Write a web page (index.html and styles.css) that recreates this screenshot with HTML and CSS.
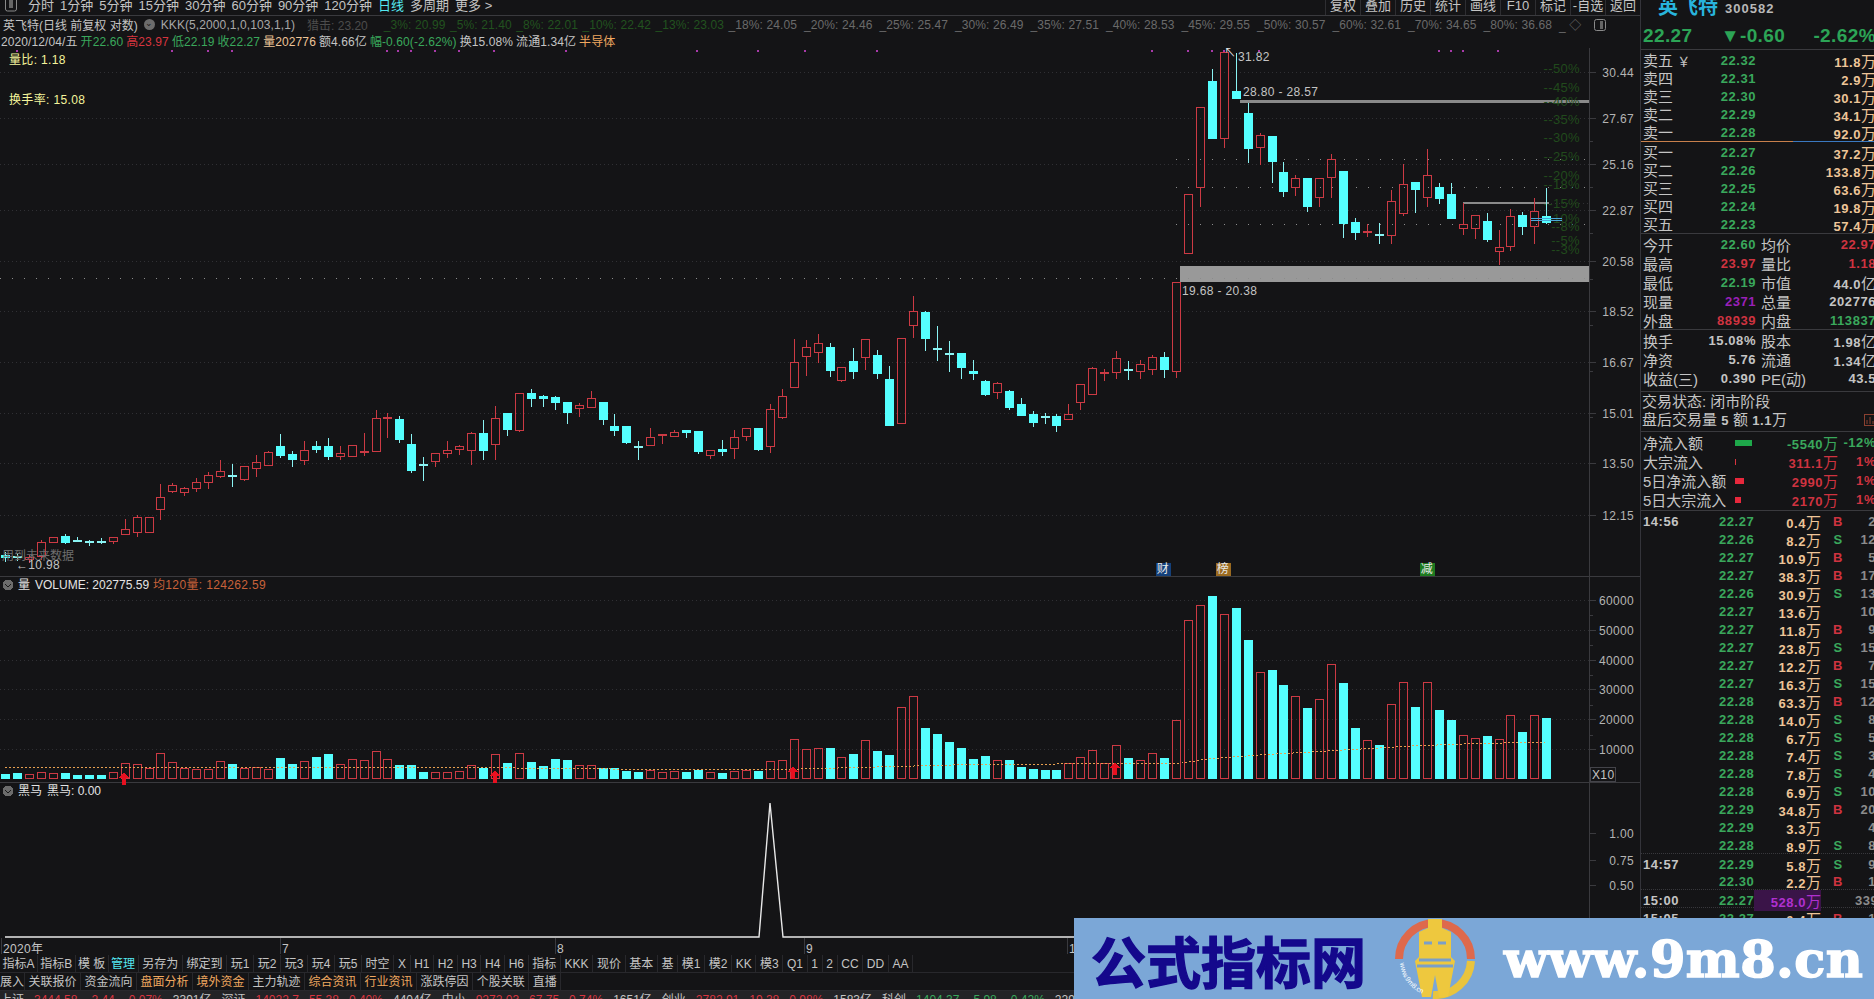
FILE: index.html
```html
<!DOCTYPE html>
<html lang="zh-CN">
<head>
  <meta charset="UTF-8" />
  <meta name="viewport" content="width=device-width, initial-scale=1" />
  <title>英飞特 300582</title>
  <link rel="stylesheet" href="styles.css">
</head>
<body>
  <div class="app">
    <main class="main">
      <div class="period-bar">
        <svg class="mini-icon" viewBox="0 0 12 12"><rect x="0.5" y="-3" width="11" height="14" rx="2"/><rect x="4" y="0" width="4" height="8"/></svg>
        <span>分时</span><span>1分钟</span><span>5分钟</span><span>15分钟</span><span>30分钟</span><span>60分钟</span><span>90分钟</span><span>120分钟</span>
        <span class="cyan">日线</span><span>多周期</span><span>更多 &gt;</span>
        <div class="period-tools">
          <span>复权</span><span>叠加</span><span>历史</span><span>统计</span><span>画线</span><span>F10</span><span>标记</span><span>-自选</span><span>返回</span>
        </div>
      </div>

      <div class="quote-line names">
        <span>英飞特(日线 前复权 对数)</span>
        <span class="chevron">⌄</span>
        <span class="kkk">KKK(5,2000,1,0,103,1,1)</span>
        <span class="hunt">猎击: 23.20</span>
        <span class="pct dark">_3%: 20.99</span><span class="pct dark">_5%: 21.40</span><span class="pct dark">_8%: 22.01</span><span class="pct dark">_10%: 22.42</span><span class="pct dark">_13%: 23.03</span>
        <span class="pct">_18%: 24.05</span><span class="pct">_20%: 24.46</span><span class="pct">_25%: 25.47</span><span class="pct">_30%: 26.49</span><span class="pct">_35%: 27.51</span><span class="pct">_40%: 28.53</span><span class="pct">_45%: 29.55</span><span class="pct">_50%: 30.57</span><span class="pct">_60%: 32.61</span><span class="pct">_70%: 34.65</span><span class="pct">_80%: 36.68</span>
        <span class="pct">_ ◇</span>
        <svg class="mini-icon end" viewBox="0 0 12 12"><rect x="0.5" y="0.5" width="11" height="11" rx="2"/><rect x="6" y="2" width="3" height="8"/></svg>
      </div>

      <div class="quote-line ohlc">
        <span>2020/12/04/五</span>
        <span class="green">开22.60</span>
        <span class="red">高23.97</span>
        <span class="green">低22.19</span>
        <span class="green">收22.27</span>
        <span class="tan">量202776</span>
        <span>额4.66亿</span>
        <span class="green">幅-0.60(-2.62%)</span>
        <span>换15.08%</span>
        <span>流通1.34亿</span>
        <span class="orange">半导体</span>
      </div>

      <div class="stage">
        <svg id="chart" class="chart" width="1640" height="907" viewBox="0 48 1640 907"></svg>
      </div>

      <div class="toolbar">
        <span class="tight">指标A</span><span class="tight">指标B</span><span class="tight">模 板</span><span class="tight cyan">管理</span><span>另存为</span><span>绑定到</span><span>玩1</span><span>玩2</span><span>玩3</span><span>玩4</span><span>玩5</span><span>时空</span><span>X</span><span>H1</span><span>H2</span><span>H3</span><span>H4</span><span>H6</span><span>指标</span><span>KKK</span><span>现价</span><span>基本</span><span>基</span><span>模1</span><span>模2</span><span>KK</span><span>模3</span><span>Q1</span><span>1</span><span>2</span><span>CC</span><span>DD</span><span>AA</span>
      </div>
      <div class="toolbar tabs">
        <span class="cut">展入</span><span>关联报价</span><span>资金流向</span><span class="orange">盘面分析</span><span class="orange">境外资金</span><span>主力轨迹</span><span class="orange">综合资讯</span><span class="orange">行业资讯</span><span>涨跌停因</span><span>个股关联</span><span>直播</span>
      </div>
      <div class="status-bar">
        <span>上证</span><span class="red">3444.58</span><span class="red">-2.44</span><span class="red">-0.07%</span><span>3391亿</span>
        <span>深证</span><span class="red">14022.7</span><span class="red">55.38</span><span class="red">0.40%</span><span>4404亿</span>
        <span>中小</span><span class="red">9272.03</span><span class="red">67.75</span><span class="red">0.74%</span><span>1651亿</span>
        <span>创业</span><span class="red">2782.91</span><span class="red">19.38</span><span class="red">0.98%</span><span>1583亿</span>
        <span>科创</span><span class="green">1404.37</span><span class="green">-5.98</span><span class="green">-0.42%</span><span>229.7亿</span>
      </div>
    </main>

    <aside class="side">
      <div class="stock-head"><span class="stock-name">英飞特</span><span class="stock-code">300582</span></div>
      <div class="price-line">
        <span>22.27</span><span>▼-0.60</span><span>-2.62%</span>
      </div>

      <section class="book">
        <div class="book-row"><span class="cn">卖五 <small>￥</small></span><b class="green">22.32</b><b class="tan">11.8<i>万</i></b></div>
        <div class="book-row"><span class="cn">卖四</span><b class="green">22.31</b><b class="tan">2.9<i>万</i></b></div>
        <div class="book-row"><span class="cn">卖三</span><b class="green">22.30</b><b class="tan">30.1<i>万</i></b></div>
        <div class="book-row"><span class="cn">卖二</span><b class="green">22.29</b><b class="tan">34.1<i>万</i></b></div>
        <div class="book-row"><span class="cn">卖一</span><b class="green">22.28</b><b class="tan">92.0<i>万</i></b></div>
      </section>
      <div class="book-split"></div>
      <section class="book buy bordered">
        <div class="book-row"><span class="cn">买一</span><b class="green">22.27</b><b class="tan">37.2<i>万</i></b></div>
        <div class="book-row"><span class="cn">买二</span><b class="green">22.26</b><b class="tan">133.8<i>万</i></b></div>
        <div class="book-row"><span class="cn">买三</span><b class="green">22.25</b><b class="tan">63.6<i>万</i></b></div>
        <div class="book-row"><span class="cn">买四</span><b class="green">22.24</b><b class="tan">19.8<i>万</i></b></div>
        <div class="book-row"><span class="cn">买五</span><b class="green">22.23</b><b class="tan">57.4<i>万</i></b></div>
      </section>

      <section class="bordered">
        <div class="info-row"><span class="cn">今开</span><b class="green">22.60</b><span class="cn">均价</span><b class="red">22.97</b></div>
        <div class="info-row"><span class="cn">最高</span><b class="red">23.97</b><span class="cn">量比</span><b class="red">1.18</b></div>
        <div class="info-row"><span class="cn">最低</span><b class="green">22.19</b><span class="cn">市值</span><b>44.0<i>亿</i></b></div>
        <div class="info-row"><span class="cn">现量</span><b class="purple">2371</b><span class="cn">总量</span><b>202776</b></div>
        <div class="info-row"><span class="cn">外盘</span><b class="red">88939</b><span class="cn">内盘</span><b class="green">113837</b></div>
      </section>

      <section class="bordered pad-bottom">
        <div class="info-row"><span class="cn">换手</span><b>15.08%</b><span class="cn">股本</span><b>1.98<i>亿</i></b></div>
        <div class="info-row"><span class="cn">净资</span><b>5.76</b><span class="cn">流通</span><b>1.34<i>亿</i></b></div>
        <div class="info-row"><span class="cn">收益(三)</span><b>0.390</b><span class="cn">PE(动)</span><b>43.5</b></div>
      </section>

      <section class="bordered after-hours">
        <div class="status-row cn">交易状态: 闭市阶段</div>
        <div class="status-row cn">盘后交易量 <b>5</b> 额 <b>1.1</b>万
          <svg class="mini-chart" viewBox="0 0 12 12"><rect x="0.5" y="0.5" width="11" height="11"/><path d="M3 10V6M6 10V3M9 10V7"/></svg>
        </div>
      </section>

      <section class="bordered flow">
        <div class="flow-row"><span class="cn">净流入额</span><em class="flow-bar bar-green"></em><b class="green">-5540<i>万</i></b><b class="green">-12%</b></div>
        <div class="flow-row"><span class="cn">大宗流入</span><em class="flow-bar bar-tick"></em><b class="red">311.1<i>万</i></b><b class="red">1%</b></div>
        <div class="flow-row"><span class="cn">5日净流入额</span><em class="flow-bar bar-red"></em><b class="red">2990<i>万</i></b><b class="red">1%</b></div>
        <div class="flow-row"><span class="cn">5日大宗流入</span><em class="flow-bar bar-small"></em><b class="red">2170<i>万</i></b><b class="red">1%</b></div>
      </section>

      <section id="ticks" class="ticks"></section>
    </aside>
  </div>

  <div class="banner">
    <span class="banner-title">公式指标网</span>
    <svg class="banner-logo" viewBox="0 0 80 80">
      <path class="arc-red" d="M4 40 A36 36 0 0 1 76 40"/>
      <path class="arc-yellow" d="M76 42 A36 36 0 0 1 38 76"/>
      <path class="figure" d="M33 0H47V9L56 13V38L60 42L53 78H44L40 56L36 78H27L20 42L24 38V13L33 9Z"/>
      <path class="figure-band" d="M24 41H56M22 47H58M29 24H37M43 24H51"/>
      <path id="logoArc" class="arc-guide" d="M5 44 A36 36 0 0 0 36 77"/>
      <text class="logo-text"><textPath href="#logoArc">www.9m8.cn</textPath></text>
    </svg>
    <span class="banner-url">www.9m8.cn</span>
  </div>

  <script src="chart.js"></script>
</body>
</html>
```

FILE: styles.css
```css
* {
  box-sizing: border-box;
}
html, body {
  margin: 0;
  height: 100%;
  overflow: hidden;
}
body {
  background: #141416;
  color: #c4c4c4;
  font-family: "Liberation Sans", "Noto Sans CJK SC", sans-serif;
  font-size: 12px;
}
.app {
  display: flex;
  width: 1874px;
  height: 999px;
}
.main {
  width: 1641px;
  height: 999px;
  border-right: 1px solid #34343a;
  display: flex;
  flex-direction: column;
  flex-shrink: 0;
  overflow: hidden;
}

.cyan { color: #55e8f0; }
.green { color: #3aa85c; }
.red { color: #d8343f; }
.tan { color: #eec598; }
.orange { color: #f0a860; }
.purple { color: #a020c0; }

/* top period bar */
.period-bar {
  height: 16px;
  flex-shrink: 0;
  display: flex;
  gap: 6px;
  font-size: 13px;
  line-height: 11px;
  border-bottom: 1px solid #3a3a3e;
  overflow: hidden;
}
.mini-icon {
  width: 12px;
  height: 12px;
  margin: 0 5px 0 5px;
  fill: none;
  stroke: #8a8a8a;
}
.mini-icon rect + rect {
  fill: #666;
  stroke: none;
}
.period-tools {
  margin-left: auto;
  display: flex;
}
.period-tools span {
  width: 35px;
  height: 15px;
  text-align: center;
  border-left: 1px solid #2e2e32;
}

/* quote text rows */
.quote-line {
  display: flex;
  align-items: center;
  flex-shrink: 0;
  white-space: nowrap;
}
.names {
  height: 17px;
  padding-left: 3px;
}
.chevron {
  width: 11px;
  height: 11px;
  margin: 0 6px 0 6px;
  border-radius: 50%;
  background: #6c6c6c;
  color: #1a1a1a;
  font-size: 9px;
  line-height: 8px;
  text-align: center;
}
.kkk {
  letter-spacing: 0.1px;
  color: #a8a8a8;
}
.hunt {
  margin-left: 12px;
  margin-right: 16px;
  color: #4c4c4c;
}
.pct {
  margin-right: 7px;
  color: #6a6a6a;
  letter-spacing: 0.1px;
}
.pct.dark {
  margin-right: 4.5px;
  color: #22521f;
}
.names .end {
  margin: 0 0 0 6px;
}
.ohlc {
  height: 15px;
  padding: 0 0 1px 1px;
  gap: 3px;
  letter-spacing: 0.1px;
}

/* chart */
.stage {
  position: relative;
  height: 907px;
  flex-shrink: 0;
}
.chart {
  display: block;
  shape-rendering: crispEdges;
}
.grid {
  stroke: #303034;
  stroke-dasharray: 1 3;
}
.grid-sparse {
  stroke: #8c8c8c;
  stroke-dasharray: 1 11;
}
.pane-line {
  stroke: #3a3a3e;
}
.axis-line {
  stroke: #3a3a3e;
}
.band {
  fill: #999999;
}
.band-thin {
  fill: #8a8a8a;
}
.purple-dot {
  fill: #a83aa8;
}
.up {
  fill: none;
  stroke: #cc3a44;
}
.down {
  fill: #55ffff;
}
.wick-up {
  stroke: #cc3a44;
}
.wick-down {
  stroke: #8af4f4;
}
.ma-line {
  fill: none;
  stroke: #e8a050;
  stroke-dasharray: 2 2;
}
.signal {
  fill: #e81020;
}
.black-horse {
  fill: none;
  stroke: #e8e8e8;
  stroke-width: 1.4;
  shape-rendering: geometricPrecision;
}
.level-blue {
  stroke: #4aa8d8;
}
.chart text {
  fill: #c4c4c4;
  font-size: 12px;
  letter-spacing: 0.35px;
  dominant-baseline: middle;
}
.chart .axis-label {
  text-anchor: end;
  fill: #b4b4b4;
}
.chart .pct-label {
  text-anchor: end;
  fill: #214a1c;
  font-size: 13px;
}
.chart .side-note {
  fill: #f4f49c;
}
.chart .note-dim {
  fill: #6e6e6e;
  letter-spacing: 0;
}
.chart .vol-avg {
  fill: #c8623a;
}
.chart .white {
  fill: #e4e4e4;
}
.chart .legend {
  fill: #e4e4e4;
  letter-spacing: 0;
}
.tag-blue { fill: #14407a; }
.tag-brown { fill: #9a6a20; }
.tag-green { fill: #1e7a20; }
.chart .tag-text {
  text-anchor: middle;
  fill: #e8e8e8;
}
.x10 {
  fill: #141416;
  stroke: #44444a;
}
.chev-circle {
  fill: #6c6c6c;
}
.chev-mark {
  fill: none;
  stroke: #1a1a1a;
}

/* bottom toolbars */
.toolbar {
  height: 18px;
  flex-shrink: 0;
  display: flex;
  line-height: 18px;
  border-bottom: 1px solid #28282c;
  white-space: nowrap;
}
.toolbar span {
  padding: 0 3.65px;
  border-right: 1px solid #28282c;
}
.toolbar .tight {
  padding: 0 2.4px;
}
.tabs span {
  padding: 0 3.5px;
}
.tabs .cut {
  width: 25px;
  padding: 0;
  text-align: right;
  overflow: hidden;
}
.status-bar {
  height: 9px;
  flex-shrink: 0;
  display: flex;
  gap: 10px;
  padding-top: 2px;
  background: #232326;
  line-height: 14px;
  overflow: hidden;
  white-space: nowrap;
}

/* right panel */
.side {
  width: 233px;
  height: 999px;
  flex-shrink: 0;
  overflow: hidden;
}
.stock-head {
  height: 17px;
  overflow: hidden;
  display: flex;
  align-items: center;
}
.stock-name {
  margin-left: 17px;
  margin-top: -3px;
  color: #28b4dc;
  font-size: 20px;
  font-weight: bold;
  line-height: 20px;
}
.stock-code {
  margin-left: 7px;
  font-weight: bold;
  font-size: 13px;
  letter-spacing: 1px;
  color: #b8b8b8;
}
.price-line {
  height: 33px;
  display: flex;
  justify-content: space-between;
  align-items: center;
  width: 235px;
  padding: 5px 0 0 2px;
  border-bottom: 1px solid #3a3a3e;
  color: #2ca456;
  font-size: 19px;
  font-weight: bold;
  letter-spacing: 0.4px;
}
.cn {
  font-size: 15px;
  white-space: nowrap;
  color: #c4c4c4;
}
.cn small {
  font-size: 13px;
}
.side b {
  font-size: 13px;
  letter-spacing: 0.55px;
  text-align: right;
  white-space: nowrap;
  color: #c4c4c4;
}
.side b.green { color: #3aa85c; }
.side b.red { color: #cf3340; }
.side b.tan { color: #eec598; }
.side b.purple { color: #9a20b8; }
.side i {
  font-style: normal;
  font-weight: normal;
  font-size: 15px;
  letter-spacing: 0;
}
.book-row {
  height: 18px;
  width: 235px;
  padding-left: 2px;
  display: grid;
  grid-template-columns: 76px 37px 120px;
  align-items: center;
}
.book-row .cn {
  margin-top: -3px;
}
.book-split {
  height: 2px;
  margin-top: 1px;
  background: linear-gradient(90deg, #c8804c 0, #c8804c 152px, #3a78c0 152px, #3a78c0 100%);
  border-bottom: 1px solid #141416;
}
.bordered {
  border-bottom: 1px solid #3a3a3e;
}
.book.buy {
  margin-top: -1px;
  padding-bottom: 1px;
}
.info-row {
  height: 19px;
  width: 235px;
  padding-left: 2px;
  display: grid;
  grid-template-columns: 76px 37px 5px 40px 75px;
  align-items: center;
}
.info-row .cn:nth-child(1) {
  grid-column: 1;
}
.info-row b:nth-child(2) {
  grid-column: 2;
  justify-self: end;
}
.info-row .cn:nth-child(3) {
  grid-column: 4;
}
.info-row b:nth-child(4) {
  grid-column: 5;
}
.pad-bottom {
  padding-bottom: 4px;
}
.after-hours {
  padding: 1px 0 2px 1px;
}
.status-row {
  height: 18px;
  line-height: 18px;
  position: relative;
}
.status-row b {
  font-size: 13px;
}
.mini-chart {
  position: absolute;
  left: 222px;
  top: 3px;
  width: 12px;
  height: 12px;
  fill: none;
  stroke: #8a4030;
}
.flow {
  padding-bottom: 2px;
}
.flow-row {
  height: 19px;
  width: 235px;
  padding-left: 2px;
  display: grid;
  grid-template-columns: 92px 24px 79px 38px;
  align-items: center;
}
.flow-bar {
  display: block;
  height: 6px;
}
.bar-green { width: 17px; background: #1ea84a; }
.bar-tick { width: 1px; background: #d8343f; }
.bar-red { width: 9px; background: #e8283c; }
.bar-small { width: 6px; background: #e8283c; }
.tick-row {
  height: 18px;
  width: 235px;
  padding-left: 2px;
  display: grid;
  grid-template-columns: 76px 35px 67px 34px 21px;
  align-items: center;
}
.tick-row.break {
  border-top: 1px dotted #38383c;
}
.tick-row .time {
  text-align: left;
}
.tick-row .side-b {
  text-align: center;
}
.side b.dim {
  color: #8c8c8c;
}
.side b.tick-vol {
  color: #eec598;
}
.side b.tick-big {
  color: #b030d0;
  background: #3a1448;
}

/* watermark banner lies over the bottom right corner */
.banner {
  position: absolute;
  right: 0;
  bottom: 0;
  width: 800px;
  height: 81px;
  display: flex;
  align-items: center;
  padding-left: 17px;
  background: #7ba7d7;
}
.banner-title {
  width: 275px;
  font-family: "Noto Sans CJK SC", sans-serif;
  font-size: 55px;
  font-weight: bold;
  line-height: 60px;
  color: #14088c;
  -webkit-text-stroke: 1.4px #14088c;
  white-space: nowrap;
}
.banner-logo {
  width: 80px;
  height: 80px;
  margin-left: 29px;
}
.arc-red {
  fill: none;
  stroke: #de694c;
  stroke-width: 8;
}
.arc-yellow {
  fill: none;
  stroke: #e9c43e;
  stroke-width: 8;
}
.arc-guide {
  fill: none;
}
.figure {
  fill: #eec83e;
}
.figure-band {
  fill: none;
  stroke: #7b9fc8;
  stroke-width: 3;
}
.logo-text {
  font-family: "Liberation Sans", sans-serif;
  font-size: 7px;
  fill: #ffffff;
}
.banner-url {
  margin-left: 29px;
  font-family: "DejaVu Serif", serif;
  font-size: 51px;
  font-weight: bold;
  letter-spacing: 0.4px;
  color: #ffffff;
  -webkit-text-stroke: 1.5px #ffffff;
  white-space: nowrap;
}
```

FILE: chart.js
```js
// candle data in screen pixels: high, body top, body bottom, low, 0 = up (red) 1 = down (cyan)
const candles = [
  [552,555,558,562,1],[553,556,557,561,1],[555,557,560,563,0],[540,542,557,560,0],[537,537,543,543,0],
  [534,536,543,544,1],[537,540,541,542,1],[540,541,543,546,1],[538,541,543,544,1],[537,537,542,544,0],
  [519,529,535,535,0],[515,517,533,537,0],[517,517,533,533,0],[484,497,510,520,0],[483,485,492,493,0],
  [487,488,493,496,0],[478,482,489,492,0],[472,475,483,489,0],[460,471,477,478,0],[464,475,476,487,1],
  [466,466,480,481,0],[455,462,469,477,0],[451,452,466,466,0],[434,446,456,458,1],[451,454,460,467,1],
  [441,450,461,465,0],[441,446,450,453,1],[438,446,457,460,1],[446,453,457,460,0],[445,445,457,457,0],
  [433,451,452,456,0],[410,418,452,452,0],[413,417,419,438,0],[416,419,440,443,1],[434,444,471,473,1],
  [457,464,465,481,1],[453,453,462,467,0],[441,450,454,458,0],[445,446,450,455,0],[432,433,451,465,0],
  [420,433,451,460,1],[406,418,445,460,0],[413,413,430,436,1],[393,393,431,432,0],[389,393,399,407,1],
  [395,396,399,407,1],[396,397,403,410,1],[402,402,413,424,1],[403,405,409,417,0],[391,398,408,408,0],
  [402,402,420,425,1],[414,426,431,436,1],[426,426,443,444,1],[441,446,447,460,1],[428,437,446,446,0],
  [434,434,436,444,0],[430,432,437,437,0],[430,430,433,438,1],[431,431,452,454,1],[450,450,456,459,0],
  [440,449,452,456,1],[430,437,449,459,0],[428,428,437,441,0],[428,428,450,451,1],[404,409,447,453,0],
  [389,396,418,419,0],[339,362,388,388,0],[340,347,357,376,0],[334,343,353,363,0],[343,347,371,377,1],
  [367,367,381,382,0],[348,361,372,379,1],[339,339,358,370,0],[350,355,374,379,1],[366,379,426,426,1],
  [338,338,424,424,0],[296,311,326,338,0],[311,312,339,351,1],[326,348,349,361,1],[341,353,354,372,1],
  [353,353,368,379,1],[360,371,374,380,1],[380,381,395,396,1],[382,383,393,399,0],[390,391,408,410,1],
  [398,404,416,416,1],[411,414,423,427,1],[413,416,418,424,1],[414,416,426,432,1],[404,414,420,420,0],
  [384,384,403,410,0],[367,368,395,395,0],[369,372,374,381,0],[351,358,373,379,0],[361,369,370,380,1],
  [360,364,372,379,0],[355,357,370,375,0],[352,357,370,378,1],[282,282,372,378,0],[194,194,254,254,0],
  [107,107,188,207,0],[69,81,139,139,1],[52,52,139,148,0],[53,91,99,99,1],[103,113,149,163,1],
  [133,135,148,165,0],[136,136,162,183,1],[162,172,192,197,1],[175,178,188,196,0],[178,178,207,212,1],
  [178,178,198,207,0],[154,159,178,198,0],[171,171,224,238,1],[218,222,233,240,1],[224,231,233,237,0],
  [223,234,235,244,1],[190,201,236,244,0],[164,184,214,216,0],[182,182,190,213,1],[149,175,198,207,0],
  [183,187,199,204,1],[183,194,219,219,1],[203,224,229,235,0],[215,215,229,239,0],[213,221,240,242,1],
  [230,247,252,265,0],[209,216,247,251,0],[212,215,227,235,1],[198,211,227,244,0],[188,216,223,224,1]
];

// volume bar tops, counted in thirds of a pixel below y=570 (bars stand on y=779)
const volumes = [
  613,609,613,607,610,609,615,615,615,607,580,583,593,550,577,593,597,597,574,582,593,590,598,564,582,
  574,561,552,583,568,571,544,568,585,585,606,607,607,604,586,594,553,579,550,576,588,567,570,586,586,
  594,594,603,606,601,607,604,606,600,607,609,604,601,603,574,571,508,538,535,534,562,552,511,543,555,
  412,379,474,492,516,534,567,558,571,570,591,597,600,600,580,562,541,580,526,564,571,550,564,451,151,
  106,78,133,114,210,307,300,345,379,414,388,283,339,474,511,525,403,337,411,337,420,450,496,505,498,
  508,436,486,436,444
];

const priceAxis = [['30.44',72],['27.67',118],['25.16',164],['22.87',210],['20.58',261],['18.52',311],['16.67',362],['15.01',413],['13.50',463],['12.15',515]];
const volumeAxis = [['60000',600],['50000',630],['40000',660],['30000',689],['20000',719],['10000',749]];
const horseAxis = [['1.00',833],['0.75',860],['0.50',885]];
const pctLabels = [['50%',70],['45%',89],['40%',103],['35%',121],['30%',139],['25%',158],['20%',177],['18%',186],['15%',205],['10%',220],['8%',228],['5%',242],['3%',251]];
const purpleDots = [17,172,208,232,387,398,411,435,459,494,566,697,758,805,877,1152,1188,1212,1224,1259,1439,1451,1463,1498];
const maLine = '5,768 420,767 612,769 800,769 953,765 1055,764 1182,763 1208,759 1259,755 1310,752 1361,749 1412,746 1463,744 1546,742';

const svg = document.getElementById('chart');
const NS = 'http://www.w3.org/2000/svg';

function add(tag, attrs, text) {
  const el = document.createElementNS(NS, tag);
  for (const k in attrs) el.setAttribute(k, attrs[k]);
  if (text !== undefined) el.textContent = text;
  svg.appendChild(el);
  return el;
}
const line = (x1, y1, x2, y2, cls) => add('line', { x1, y1, x2, y2, class: cls });
const rect = (x, y, width, height, cls) => add('rect', { x, y, width, height, class: cls });
const label = (x, y, str, cls) => add('text', { x, y, class: cls || '' }, str);
const candleX = i => Math.round(41 + (i - 3) * 11.947);

// grid lines
priceAxis.concat(volumeAxis).forEach(a => {
  line(0, a[1] + 0.5, 1589, a[1] + 0.5, 'grid');
});
line(1176, 159.5, 1589, 159.5, 'grid-sparse');
line(1176, 187.5, 1589, 187.5, 'grid-sparse');
line(1176, 224.5, 1589, 224.5, 'grid-sparse');
line(1463, 203.5, 1589, 203.5, 'grid');

// price levels
rect(1180, 266, 409, 16, 'band');
rect(1240, 100, 349, 3, 'band-thin');
rect(1463, 202, 86, 2, 'band-thin');
rect(1463, 202, 1, 22, 'band-thin');
line(0, 278.5, 1589, 278.5, 'grid-sparse');

pctLabels.forEach(p => label(1580, p[1], '--' + p[0], 'pct-label'));

purpleDots.forEach(x => rect(x - 1, 50, 2, 2, 'purple-dot'));

// candles
candles.forEach((c, i) => {
  const x = candleX(i);
  const up = c[4] === 0;
  const wick = up ? 'wick-up' : 'wick-down';
  if (c[1] > c[0]) line(x + 0.5, c[0], x + 0.5, c[1], wick);
  if (c[3] > c[2]) line(x + 0.5, c[2], x + 0.5, c[3], wick);
  if (c[2] - c[1] <= 2) {
    line(x - 4, c[1] + 0.5, x + 5, c[1] + 0.5, wick);
    line(x - 4, c[1] + 1.5, x + 5, c[1] + 1.5, wick);
  } else if (up) {
    rect(x - 3.5, c[1] + 0.5, 8, c[2] - c[1] - 1, 'up');
  } else {
    rect(x - 4, c[1], 9, c[2] - c[1], 'down');
  }
});
line(1531, 218.5, 1562, 218.5, 'level-blue');
line(1531, 220.5, 1562, 220.5, 'level-blue');

// price notes
label(9, 61, '量比: 1.18', 'side-note');
label(9, 101, '换手率: 15.08', 'side-note');
label(1224, 54, '↖', 'white');
label(1238, 58, '31.82');
label(1243, 93, '28.80 - 28.57');
label(1182, 292, '19.68 - 20.38');
label(2, 557, '用到未来数据', 'note-dim');
label(16, 566, '←10.98');

// event tags on the pane edge
[[1163, '财', 'tag-blue'], [1223, '榜', 'tag-brown'], [1427, '减', 'tag-green']].forEach(t => {
  rect(t[0] - 7, 563, 15, 13, t[2]);
  label(t[0], 570, t[1], 'tag-text');
});

// pane separators
line(0, 576.5, 1640, 576.5, 'pane-line');
line(0, 782.5, 1640, 782.5, 'pane-line');
line(1589.5, 48, 1589.5, 955, 'axis-line');

// axis labels
priceAxis.concat(volumeAxis).concat(horseAxis).forEach(a => {
  line(1590, a[1] + 0.5, 1596, a[1] + 0.5, 'axis-line');
  label(1634, a[1] + 2, a[0], 'axis-label');
});
for (let y = 141; y < 500; y += 46) line(1590, y + 0.5, 1593, y + 0.5, 'axis-line');
for (let y = 615; y < 760; y += 30) line(1590, y + 0.5, 1593, y + 0.5, 'axis-line');

// volume pane
function chevron(y) {
  add('circle', { cx: 8, cy: y, r: 5.5, class: 'chev-circle' });
  add('path', { d: `M5 ${y - 1}L8 ${y + 2}L11 ${y - 1}`, class: 'chev-mark' });
}
chevron(585);
label(18, 586, '量', 'legend');
label(35, 586, 'VOLUME: 202775.59', 'legend');
label(153, 586, '均120量: 124262.59', 'vol-avg');

volumes.forEach((v, i) => {
  const x = candleX(i);
  const top = Math.round(570 + v / 3);
  if (candles[i][4] === 0) rect(x - 3.5, top + 0.5, 8, 779 - top - 1, 'up');
  else rect(x - 4, top, 9, 779 - top, 'down');
});
add('polyline', { points: maLine, class: 'ma-line' });

[[124, 777], [495, 775], [793, 771], [1115, 767]].forEach(p => {
  add('path', { d: `M${p[0]} ${p[1] - 5}l5 6h-3v7h-4v-7h-3z`, class: 'signal' });
});

rect(1590, 767, 25, 14, 'x10');
label(1592, 776, 'X10');

// black horse pane
chevron(791);
label(18, 792, '黑马', 'legend');
label(47, 792, '黑马: 0.00', 'legend');
add('polyline', { points: '5,937 759,937 770,803 783,937 1074,937', class: 'black-horse' });

// date axis
[['2020年', 3], ['7', 282], ['8', 557], ['9', 806], ['1', 1069]].forEach(d => {
  label(d[1], 950, d[0]);
  line(d[1] - 2, 938, d[1] - 2, 954, 'axis-line');
});

// tick list in the side panel
const ticks = [
  ['14:56','22.27','0.4','B','2'],['','22.26','8.2','S','12'],['','22.27','10.9','B','5'],['','22.27','38.3','B','17'],
  ['','22.26','30.9','S','13'],['','22.27','13.6','','10'],['','22.27','11.8','B','9'],['','22.27','23.8','S','15'],
  ['','22.27','12.2','B','7'],['','22.27','16.3','S','15'],['','22.28','63.3','B','12'],['','22.28','14.0','S','8'],
  ['','22.28','6.7','S','5'],['','22.28','7.4','S','3'],['','22.28','7.8','S','4'],['','22.28','6.9','S','10'],
  ['','22.29','34.8','B','20'],['','22.29','3.3','','4'],['','22.28','8.9','S','8'],['14:57','22.29','5.8','S','9'],
  ['','22.30','2.2','B','1'],['15:00','22.27','528.0','','339'],['15:05','22.27','0.4','B','1']
];
document.getElementById('ticks').innerHTML = ticks.map(t => {
  const sideCls = t[3] === 'B' ? 'red' : 'green';
  const volCls = t[2] === '528.0' ? 'tick-big' : 'tick-vol';
  return `<div class="tick-row${t[0] && t[0] !== '14:56' ? ' break' : ''}">` +
    `<b class="time">${t[0]}</b><b class="green">${t[1]}</b>` +
    `<b class="${volCls}">${t[2]}<i>万</i></b><b class="side-b ${sideCls}">${t[3]}</b><b class="dim">${t[4]}</b></div>`;
}).join('');
```
